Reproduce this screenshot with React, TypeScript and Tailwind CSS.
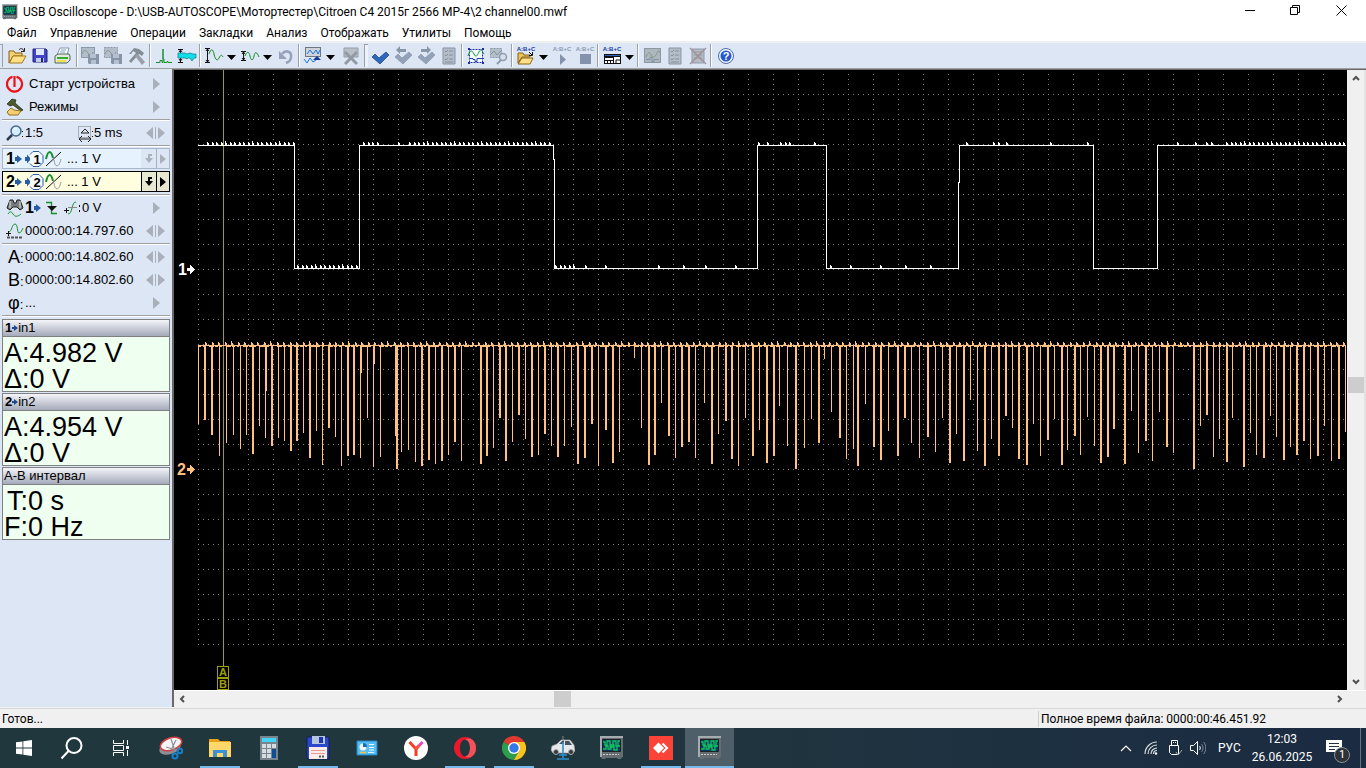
import React from 'react';
import { clsx } from 'clsx';

const MENU = ['Файл', 'Управление', 'Операции', 'Закладки', 'Анализ', 'Отображать', 'Утилиты', 'Помощь'];

type IconProps = { size?: number; className?: string; children: React.ReactNode };

const Icon = ({ size = 20, className, children }: IconProps) => (
    <svg width={size} height={size} viewBox={`0 0 ${size} ${size}`} fill="none" className={clsx('block shrink-0', className)} aria-hidden="true">{children}</svg>
);

/* ---------- toolbar icons ---------- */

const OpenIcon = () => (
    <Icon>
        <path d="M1 5h5l1 2h7v3H5l-4 7z" fill="#f3cf75" stroke="#8a6310" />
        <path d="M1.500 17 5 10h13l-4 7z" fill="#ffe08a" stroke="#a8791b" />
        <path d="M11 4c1-2 4-2 5 1M16.500 2v3.500H13" stroke="#222" />
    </Icon>
);

const SaveIcon = () => (
    <Icon>
        <path d="M2 3h13l1 1v12H2z" fill="#4343c8" stroke="#22227e" />
        <path d="M5 3h8v6H5z" fill="#dfe8fb" />
        <path d="M5 12h8v4H5z" fill="#c5cbe0" />
        <path d="M10 12h2v4h-2z" fill="#22227e" />
    </Icon>
);

const PrintIcon = () => (
    <Icon>
        <path d="M6 2h9l-2 7H3z" fill="#fff" stroke="#8b98a8" />
        <path d="M7 4h5M6 6h5" stroke="#72a7d0" />
        <path d="m1 10 3-2h11l1 2v4l-3 3H1z" fill="#e4e8e2" stroke="#50664d" />
        <path d="M3 12h11" stroke="#35ad2e" strokeWidth="2" />
        <path d="M3 15h9" stroke="#eee24a" strokeWidth="2" />
    </Icon>
);

const CopyWaveIcon = ({ dashed = false }: { dashed?: boolean }) => (
    <Icon>
        <rect x=".5" y="1.500" width="13" height="10" fill="#b4bdca" stroke="#8c97a7" strokeDasharray={dashed ? '2 1' : undefined} />
        <path d="M1 8c2-5 4-4 6-1s3 3 5-1" stroke="#7e9a8e" />
        <path d="M7 8h11v10H8l-1-1z" fill="#8794a8" />
        <path d="M9 8h6v4H9zM10 14h5v4h-5z" fill="#b5c0d0" />
    </Icon>
);

const HammerIcon = () => (
    <Icon>
        <path d="m2 8 5-6 5 1 5 4-2 3-3-2-8 9-2-2 7-8-3-2-2 3z" fill="#858d97" />
        <path d="m11 8 7 8-3 3-7-9z" fill="#9aa0aa" />
    </Icon>
);

const PeakIcon = () => (
    <Icon>
        <path d="M2 16.500h4v-2h2v2h1V3v10h1v3.500h3v-1h1v1h4" stroke="#15902c" />
    </Icon>
);

const BandIcon = () => (
    <Icon>
        <path d="M1 3.500h5M1 16.500h5M3.500 4v4M3.500 12v4M2 6l1.500-2L5 6M2 13l1.500 2L5 13" stroke="#111" />
        <path d="M1 7h7l2 1 3-1 3 1h3v4h-2l-2 3-2-3h-2l-1 1-2-1H1z" fill="#12ddeb" stroke="#087a83" strokeWidth=".7" />
    </Icon>
);

const VertScaleIcon = ({ small = false }: { small?: boolean }) => (
    <Icon>
        {small
            ? <path d="M1 5.500h5M1 14.500h5M3.500 6v8M2 8l1.500-2L5 8M2 12l1.500 2L5 12" stroke="#111" />
            : <path d="M1 2.500h5M1 16.500h5M3.500 3v13M2 5l1.500-2L5 5M2 14l1.500 2L5 14" stroke="#111" />}
        <path d={small ? 'M5 10c2-5 4-5 5 0s3 5 4 0 3-4 5 1' : 'M5 8c2-6 4-5 5 0s3 8 5 4 3-3 4-1'} stroke="#118a24" />
    </Icon>
);

const UndoIcon = () => (
    <Icon>
        <path d="M6 8c4-5 10-2 9 3 0 3-2 5-5 6" stroke="#96a3b8" strokeWidth="2.500" />
        <path d="M3 5v8h8z" fill="#96a3b8" />
    </Icon>
);

const BookmarkWaveIcon = () => (
    <Icon>
        <rect x="2.500" y="1.500" width="15" height="9" fill="#cfd3da" stroke="#6c7783" />
        <path d="m4 8 3-4 3 4 3-4 2 4 2-4" stroke="#1578e8" />
        <path d="m1 13 3 4 3-5 3 4 3-2" stroke="#1578e8" />
        <path d="m10 14 4-4 4 4z" fill="#16389b" />
    </Icon>
);

const DeleteIcon = () => (
    <Icon className="ml-1">
        <path d="M3 2h14v9H3z" fill="#b9bfc8" stroke="#949daa" />
        <path d="m4 6 12 12M16 6 4 18" stroke="#949aa5" strokeWidth="3" />
    </Icon>
);

const CheckIcon = ({ dim = false, arrow = '' }: { dim?: boolean; arrow?: '' | 'left' | 'right' }) => (
    <Icon>
        <path d="m2 11 3-3 4 4 7-6 3 3-9 9z" fill={dim ? '#93a2b8' : '#2e67bb'} stroke={dim ? '#8997ab' : '#173f83'} strokeWidth=".7" />
        {arrow === 'left' && <path d="m3 4 4-4v3h6v3H7v2z" fill="#8997ab" />}
        {arrow === 'right' && <path d="m15 4-4-4v3H5v3h6v2z" fill="#8997ab" />}
    </Icon>
);

const ListIcon = () => (
    <Icon>
        <path d="M4 2h12v16H4z" fill="#b4bcc8" stroke="#8994a3" />
        <path d="m6 5 1 1 2-2M10 5h4m-8 4 1 1 2-2m1 1h4m-8 4 1 1 2-2m1 1h4M6 16h8" stroke="#8491a0" />
    </Icon>
);

const SelectWaveIcon = () => (
    <Icon>
        <rect x="3.500" y="3.500" width="13" height="13" fill="#f4f8ff" stroke="#1c2f9d" strokeDasharray="2 1" />
        <path d="M2 10c2-7 4-6 6-2s3 2 5-2 3-1 5 2" stroke="#15932b" />
        <path d="M3 12.500h4v1h2v2h2v-3h7" stroke="#2045a8" />
        <path d="M2 2h2v2H2zM16 2h2v2h-2zM2 16h2v2H2zM16 16h2v2h-2z" fill="#1c2f9d" />
    </Icon>
);

const FindWaveIcon = () => (
    <Icon>
        <rect x="1.500" y="2.500" width="11" height="9" fill="#b4bdca" stroke="#8c97a7" strokeDasharray="2 1" />
        <path d="m2 8 3-3 3 4 4-4" stroke="#7e9a8e" />
        <circle cx="14" cy="11" r="3.500" fill="#d5deea" stroke="#8e9cae" strokeWidth="1.500" />
        <path d="m12 14-4 4" stroke="#8e9cae" strokeWidth="2" />
    </Icon>
);

const FormulaIcon = ({ kind }: { kind: 'open' | 'play' | 'stop' | 'panel' }) => {
    const dim = kind === 'play' || kind === 'stop';
    return (
        <Icon>
            <text x="10" y="5" textAnchor="middle" fontSize="6" fontWeight="bold" fontFamily="Liberation Sans, sans-serif" fill={dim ? '#8c9ab2' : '#173a9a'}>A:B+C</text>
            {kind === 'open' && (
                <>
                    <path d="M2 7h5l1 2h6v2H6l-4 6z" fill="#eac35b" stroke="#8a6310" />
                    <path d="m2 18 4-6h11l-3 6z" fill="#ffe08a" stroke="#8a6310" />
                    <path d="m13 6 3 3m.5-3v3.500H13" stroke="#111" />
                </>
            )}
            {kind === 'play' && <path d="M8 8v11l6-5.500z" fill="#8493ad" />}
            {kind === 'stop' && <path d="M5 8h11v10H5z" fill="#8493ad" />}
            {kind === 'panel' && (
                <>
                    <path d="M2 8h17v10H2z" fill="#111" />
                    <path d="M3 12h8v2H3zM3 15h2v2H3zM6 15h2v2H6zM9 15h2v2H9zM12 11h6v6h-6z" fill="#fff" />
                    <path d="M14 17v-3h4" stroke="#111" />
                    <path d="M3 9.500h15" stroke="#2f62bd" />
                </>
            )}
        </Icon>
    );
};

const ScopePanelIcon = () => (
    <Icon>
        <rect x="2.500" y="2.500" width="16" height="14" fill="#adb7bd" stroke="#8c98a1" />
        <path d="M4 11c2-6 4-5 5-2s4 3 6-2 2-1 3 0" stroke="#7f9c8b" />
        <path d="M4 13.500h4v-2h2v4h2v-2h5" stroke="#8191a8" />
    </Icon>
);

const CrossedListIcon = () => (
    <Icon>
        <path d="M4 3h12v14H4z" fill="#b4bbc2" stroke="#929ba6" />
        <path d="M6 6h8M6 9h8M6 12h8" stroke="#929ba6" />
        <path d="M2 2 18 18M18 2 2 18" stroke="#a18d94" strokeWidth="1.300" />
    </Icon>
);

const HelpIcon = () => (
    <Icon>
        <circle cx="11" cy="10" r="6.500" fill="#2758c9" stroke="#eef4ff" strokeWidth="2" />
        <circle cx="11" cy="10" r="7.500" stroke="#2b4a93" strokeWidth=".8" />
        <text x="11" y="14" textAnchor="middle" fontSize="11" fontWeight="bold" fontFamily="Liberation Sans, sans-serif" fill="#fff">?</text>
    </Icon>
);

const ToolButton = ({ label, children, disabled }: { label: string; children: React.ReactNode; disabled?: boolean }) => (
    <button type="button" aria-label={label} disabled={disabled} className="w-[23px] h-6 flex items-center justify-center">{children}</button>
);

const DropButton = ({ label }: { label: string }) => (
    <button type="button" aria-label={label} className="w-[13px] h-6 flex items-center justify-center pt-1">
        <svg width="9" height="5" aria-hidden="true"><path d="M0 0h9L4.500 5z" fill="#000" /></svg>
    </button>
);

const Separator = () => <div className="w-1 h-[23px] flex justify-center"><div className="w-px bg-[#9a9fa8]"></div><div className="w-px bg-white"></div></div>;
const Gripper = () => <div className="w-1 h-[23px] ml-1 border-l border-t border-[#9a9fa8] bg-[#eef3fb]"></div>;

const Toolbar = () => (
    <div className="h-[25px] flex items-center bg-[#dce6f5] shrink-0">
        <div className="w-[6px] h-[23px] flex"><div className="w-[3px] border-r border-t border-[#9a9fa8]"></div></div>
        <ToolButton label="Открыть"><OpenIcon /></ToolButton>
        <ToolButton label="Сохранить"><SaveIcon /></ToolButton>
        <ToolButton label="Печать"><PrintIcon /></ToolButton>
        <Separator />
        <ToolButton label="Копировать" disabled><CopyWaveIcon /></ToolButton>
        <ToolButton label="Копировать фрагмент" disabled><CopyWaveIcon dashed /></ToolButton>
        <ToolButton label="Настройка" disabled><HammerIcon /></ToolButton>
        <Separator />
        <ToolButton label="Пики"><PeakIcon /></ToolButton>
        <ToolButton label="Полоса"><BandIcon /></ToolButton>
        <Separator />
        <ToolButton label="Масштаб"><VertScaleIcon /></ToolButton>
        <DropButton label="Выбор масштаба" />
        <ToolButton label="Усиление"><VertScaleIcon small /></ToolButton>
        <DropButton label="Выбор усиления" />
        <ToolButton label="Отменить" disabled><UndoIcon /></ToolButton>
        <Separator />
        <ToolButton label="Закладка"><BookmarkWaveIcon /></ToolButton>
        <DropButton label="Выбор закладки" />
        <ToolButton label="Удалить" disabled><DeleteIcon /></ToolButton>
        <Gripper />
        <ToolButton label="Применить"><CheckIcon /></ToolButton>
        <ToolButton label="Назад" disabled><CheckIcon dim arrow="left" /></ToolButton>
        <ToolButton label="Вперёд" disabled><CheckIcon dim arrow="right" /></ToolButton>
        <ToolButton label="Список" disabled><ListIcon /></ToolButton>
        <Separator />
        <ToolButton label="Выделение"><SelectWaveIcon /></ToolButton>
        <ToolButton label="Поиск" disabled><FindWaveIcon /></ToolButton>
        <Separator />
        <ToolButton label="Открыть скрипт"><FormulaIcon kind="open" /></ToolButton>
        <DropButton label="Выбор скрипта" />
        <ToolButton label="Выполнить" disabled><FormulaIcon kind="play" /></ToolButton>
        <ToolButton label="Остановить" disabled><FormulaIcon kind="stop" /></ToolButton>
        <Separator />
        <ToolButton label="Панель"><FormulaIcon kind="panel" /></ToolButton>
        <DropButton label="Выбор панели" />
        <Separator />
        <ToolButton label="Экран" disabled><ScopePanelIcon /></ToolButton>
        <ToolButton label="Отчёт" disabled><ListIcon /></ToolButton>
        <ToolButton label="Удалить отчёт" disabled><CrossedListIcon /></ToolButton>
        <Separator />
        <ToolButton label="Справка"><HelpIcon /></ToolButton>
    </div>
);

/* ---------- sidebar ---------- */

const NextArrow = () => (
    <button type="button" aria-label="Далее" className="ml-auto mr-3 shrink-0">
        <svg width="7" height="12" className="block" aria-hidden="true"><path d="M0 0v12l7-6z" fill="#a9b0ba" /></svg>
    </button>
);

const PairArrows = () => (
    <button type="button" aria-label="Изменить" className="ml-auto mr-[7px] shrink-0">
        <svg width="19" height="12" className="block" aria-hidden="true"><path d="M7 0v12L0 6zM9 0h1v12H9zM12 0v12l7-6z" fill="#a9b0ba" /></svg>
    </button>
);

const BlueArrow = ({ small = false }: { small?: boolean }) => (
    <svg width={small ? 6 : 7} height="8" className="block shrink-0" aria-hidden="true">
        {small
            ? <path d="M0 3h2V1l4 3-4 3V5H0z" fill="#1d4a8f" />
            : <path d="M0 2h2V0l5 4-5 4V6H0z" fill="#2a5da6" />}
    </svg>
);

const Row = ({ children }: { children: React.ReactNode }) => (
    <div className="h-[23px] flex items-center pl-[6px]">{children}</div>
);

const Rule = () => <div className="h-[3px] mx-[2px] flex flex-col justify-center"><div className="h-px bg-[#a0a0a0]"></div><div className="h-px bg-white"></div></div>;

const Channel = ({ n, active }: { n: number; active?: boolean }) => (
    <div className="h-[23px] px-[2px] py-px">
        <div className={clsx('h-full flex border', active ? 'border-black bg-[#ffffdf]' : 'border-[#a9b7ca] bg-[#e6f2fd]')}>
            <div className="flex flex-1 items-center pl-[3px]">
                <span className="text-[16px] leading-none font-bold">{n}</span>
                <BlueArrow />
                <svg width="20" height="18" viewBox="0 0 20 18" className="block ml-[3px]" aria-hidden="true">
                    <path d="M0 7h2V4.500L6 9l-4 4.500V11H0z" fill="#2a5da6" />
                    <path d="m5 4.500 3-3h6l4 4v7l-4 4H8l-3-3" stroke="#2a5da6" fill="#f5faff" />
                    <text x="12" y="14" textAnchor="middle" fontSize="13" fontWeight="bold" fontFamily="Liberation Sans, sans-serif">{n}</text>
                </svg>
                <svg width="17" height="18" viewBox="0 0 17 18" className="block" aria-hidden="true">
                    <path d="M1 9c2-9 5-9 7-1" stroke="#13902d" strokeWidth="2" fill="none" />
                    <path d="M9 10c1 8 5 8 7-1" stroke="#92989d" fill="none" />
                    <path d="M1 16 16 2" stroke="#111" />
                </svg>
                <span className="ml-[5px]">... 1 V</span>
            </div>
            <div className={clsx('w-[28px] flex', active ? 'text-black' : 'text-[#a9b0ba]')}>
                <button type="button" aria-label={`Инверсия ${n}`} className={clsx('w-[15px] flex items-center justify-center', active ? 'border-l border-black bg-[#e8e8d0]' : 'bg-[#dce6f5]')}>
                    <svg width="8" height="9" aria-hidden="true"><path d="M7 0H3v4H0l4 5 4-5H5V2h2z" fill="currentColor" /></svg>
                </button>
                <button type="button" aria-label={`Настройки ${n}`} className={clsx('w-[13px] flex items-center justify-center border-l', active ? 'border-black bg-[#e8e8d0]' : 'border-[#a9b0ba] bg-[#dce6f5]')}>
                    <svg width="6" height="10" aria-hidden="true"><path d="M0 0v10l6-5z" fill="currentColor" /></svg>
                </button>
            </div>
        </div>
    </div>
);

const Panel = ({ title, index, lines }: { title: string; index?: number; lines: string[] }) => (
    <section className="mx-[2px] mb-px h-[73px] border border-[#808080] bg-[#effff0]">
        <h2 className="h-[17px] flex items-center px-px text-[13px] font-normal border-b border-[#808080] bg-linear-to-b from-[#f4f5f9] to-[#a5aaba]">
            {index && <><span className="font-bold pl-px">{index}</span><BlueArrow small /></>}
            {title}
        </h2>
        <div className="pl-px pt-[3px] text-[27px] leading-[26px] whitespace-nowrap">
            {lines.map((l) => <p key={l} className={clsx(l.startsWith('T') && 'pl-[3px]')}>{l}</p>)}
        </div>
    </section>
);

const Sidebar = () => (
    <aside className="w-[172px] shrink-0 bg-[#dce6f5] pt-[3px] text-[13px] font-['Liberation_Sans',Arial,sans-serif]">
        <Row>
            <svg width="18" height="18" viewBox="0 0 18 18" fill="none" aria-hidden="true">
                <path d="M6.500 1.800a7.500 7.500 0 1 0 4 0M8.500 1v11" stroke="#f01018" strokeWidth="2.200" />
            </svg>
            <span className="ml-[5px]">Старт устройства</span>
            <NextArrow />
        </Row>
        <Row>
            <svg width="18" height="18" viewBox="0 0 18 18" fill="none" aria-hidden="true">
                <path d="m1 6 5-5 4 1-1 3 8 7-2 1-8-6-3 1z" fill="#4b5b2c" stroke="#1b220f" strokeWidth=".7" />
                <path d="m1 14 4-4 3 2 7 1-3 4H3z" fill="#f4cf70" stroke="#96701a" />
            </svg>
            <span className="ml-[5px]">Режимы</span>
            <NextArrow />
        </Row>
        <Rule />
        <Row>
            <svg width="19" height="18" viewBox="0 0 19 18" fill="none" aria-hidden="true">
                <circle cx="10" cy="7" r="5" fill="#d3efff" stroke="#4a6687" strokeWidth="1.500" />
                <path d="m6 11-5 5" stroke="#2d3c50" strokeWidth="2.500" />
                <path d="M8 6c0-2 2-2 3-2" stroke="#fff" />
                <path d="M16 7h1v1h-1zM16 12h1v1h-1z" fill="#111" />
            </svg>
            <span className="w-[52px]">1:5</span>
            <svg width="17" height="18" viewBox="0 0 17 18" fill="none" aria-hidden="true">
                <path d="M1.500 2.500h12v11h-12z" stroke="#777" strokeDasharray="1 1" />
                <path d="m4 9 4-4 4 4zM2 15h12M5 12l-3 3 3 3M11 12l3 3-3 3" stroke="#222" />
                <path d="M15 7h1v1h-1zM15 12h1v1h-1z" fill="#111" />
            </svg>
            <span>5 ms</span>
            <PairArrows />
        </Row>
        <Rule />
        <Channel n={1} />
        <Channel n={2} active />
        <Rule />
        <Row>
            <svg width="18" height="18" viewBox="0 0 18 18" fill="none" aria-hidden="true">
                <path d="M4 1h3l1 3h2l1-3h3l3 8-3 2-3-3H7l-3 3-3-2z" fill="#777c7c" stroke="#222" />
                <path d="M4 2v7M14 2v7" stroke="#e6e9e9" />
                <path d="M2 15c2-3 3-3 5 0s4 3 8 0" stroke="#13902d" />
            </svg>
            <span className="text-[16px] leading-none font-bold ml-px">1</span>
            <BlueArrow />
            <svg width="36" height="18" viewBox="0 0 36 18" fill="none" className="ml-[5px]" aria-hidden="true">
                <path d="M0 3.500h5.500v11H11" stroke="#13902d" strokeWidth="1.300" />
                <path d="M1 7h10l-5 5z" fill="#111" />
                <path d="M18 11.500h5M20.500 9v5" stroke="#111" />
                <path d="M22 15c5 0 3-12 8-12" stroke="#13902d" />
                <path d="M22 8.500h9" stroke="#888" />
                <path d="M33 6h1v2h-1zM33 11h1v2h-1z" fill="#111" />
            </svg>
            <span>0 V</span>
            <NextArrow />
        </Row>
        <Row>
            <svg width="19" height="18" viewBox="0 0 19 18" fill="none" aria-hidden="true">
                <path d="M0 11.500h5M2.500 9v5" stroke="#111" />
                <path d="M3 10c3-1 3-8 6-8s2 9 4 9 3-3 4-5" stroke="#13902d" />
                <path d="M1 15.500h16" stroke="#555" strokeWidth="2" strokeDasharray="3 1" />
            </svg>
            <span>0000:00:14.797.60</span>
            <PairArrows />
        </Row>
        <Rule />
        {['A', 'B'].map((c) => (
            <Row key={c}>
                <span className="w-[19px] pl-[2px] text-[18px] leading-none whitespace-nowrap">{c}<span className="text-[13px]">:</span></span>
                <span>0000:00:14.802.60</span>
                <PairArrows />
            </Row>
        ))}
        <Row>
            <span className="w-[19px] pl-[2px] text-[18px] leading-none whitespace-nowrap">φ<span className="text-[13px]">:</span></span>
            <span>...</span>
            <NextArrow />
        </Row>
        <Rule />
        <div className="pt-[2px]">
            <Panel title="in1" index={1} lines={['A:4.982 V', 'Δ:0 V']} />
            <Panel title="in2" index={2} lines={['A:4.954 V', 'Δ:0 V']} />
            <Panel title="A-B интервал" lines={['T:0 s', 'F:0 Hz']} />
        </div>
    </aside>
);

/* ---------- waveforms ---------- */

const HIGH = 145;
const LOW = 268;

// spans of ripple on channel 1: from, to, level
const RIPPLE: [number, number, number][] = [
    [207, 293, HIGH], [297, 358, LOW], [363, 378, HIGH], [398, 399, HIGH], [409, 552, HIGH],
    [555, 575, LOW], [585, 586, LOW], [605, 606, LOW], [658, 659, LOW], [683, 684, LOW], [705, 706, LOW], [735, 736, LOW],
    [758, 759, HIGH], [767, 768, HIGH], [780, 793, HIGH], [814, 815, HIGH], [830, 831, LOW], [850, 851, LOW], [880, 881, LOW], [905, 906, LOW], [930, 931, LOW],
    [966, 967, HIGH], [993, 999, HIGH], [1006, 1007, HIGH], [1050, 1051, HIGH], [1087, 1088, HIGH],
    [1177, 1178, HIGH], [1195, 1196, HIGH], [1206, 1212, HIGH], [1226, 1344, HIGH],
];

const ripple = (from: number, to: number, y: number, step: number) => {
    let d = '';
    for (let x = from, i = 0; x < to; x += step, i++) {
        const px = Math.round(x);
        const h = i % 6 === 4 ? 5 : 4;
        d += `M${px} ${y - h + 1}h1v${h}h-1zM${px + 1} ${y - 2}h1v3h-1z`;
    }
    return d;
};

// pulses on channel 2: x, bottom, width
const PULSES: [number, number, number][] = [
    [198, 424, 1], [204, 420, 2], [211, 435, 2], [219, 456, 1], [226, 443, 1], [233, 435, 1], [240, 449, 1], [246, 435, 1],
    [252, 454, 2], [259, 426, 1], [265, 438, 1], [266, 391, 1], [271, 446, 2], [278, 438, 1], [284, 441, 1], [290, 451, 2],
    [296, 441, 2], [303, 433, 1], [309, 458, 2], [316, 431, 1], [322, 465, 1], [328, 428, 2], [335, 437, 1], [341, 466, 1],
    [347, 456, 2], [353, 455, 2], [360, 458, 1], [361, 373, 1], [367, 418, 1], [373, 467, 1], [374, 364, 1], [380, 457, 1],
    [395, 436, 1], [396, 469, 2], [401, 452, 1], [408, 450, 1], [415, 462, 1], [421, 466, 2], [428, 460, 2], [435, 464, 1],
    [441, 461, 2], [448, 455, 1], [454, 442, 2], [461, 461, 1], [480, 464, 2], [486, 456, 2], [493, 448, 1], [499, 418, 2],
    [505, 461, 2], [512, 442, 1], [518, 415, 2], [525, 439, 1], [531, 457, 2], [538, 455, 1], [544, 434, 2], [551, 446, 1],
    [557, 457, 2], [564, 446, 1], [571, 427, 1], [577, 464, 2], [584, 458, 2], [591, 424, 2], [598, 466, 1], [605, 430, 2],
    [612, 463, 2], [619, 452, 1], [634, 358, 1], [641, 428, 1], [648, 465, 2], [654, 455, 2], [661, 403, 1], [668, 436, 2],
    [675, 458, 1], [681, 447, 2], [688, 442, 2], [695, 458, 1], [704, 403, 1], [711, 464, 2], [718, 434, 1], [725, 421, 2],
    [731, 459, 2], [738, 466, 1], [745, 418, 1], [752, 456, 2], [759, 430, 1], [766, 463, 2], [773, 456, 2], [779, 406, 1],
    [787, 446, 1], [795, 469, 2], [804, 448, 1], [811, 419, 1], [818, 443, 2], [824, 359, 1], [831, 412, 1], [839, 438, 2],
    [846, 459, 1], [853, 449, 1], [857, 466, 2], [865, 404, 1], [873, 447, 2], [880, 460, 2], [888, 431, 1], [897, 456, 2],
    [904, 418, 2], [911, 443, 1], [919, 458, 1], [927, 437, 2], [935, 452, 1], [942, 418, 1], [949, 463, 2], [956, 434, 1],
    [963, 461, 2], [970, 400, 1], [977, 451, 1], [984, 466, 2], [991, 439, 1], [998, 456, 2], [1005, 416, 2], [1012, 428, 1],
    [1018, 459, 2], [1026, 465, 2], [1033, 424, 1], [1040, 456, 1], [1047, 440, 2], [1054, 419, 1], [1061, 465, 2], [1067, 450, 1],
    [1074, 436, 2], [1080, 455, 1], [1087, 417, 1], [1094, 446, 1], [1100, 463, 2], [1107, 457, 2], [1113, 429, 2], [1124, 464, 2],
    [1131, 411, 1], [1138, 453, 1], [1145, 441, 2], [1152, 461, 1], [1159, 412, 1], [1166, 447, 2], [1173, 453, 1], [1193, 469, 2],
    [1200, 426, 1], [1206, 415, 2], [1213, 457, 1], [1219, 439, 1], [1226, 462, 2], [1232, 418, 1], [1243, 467, 2], [1250, 433, 1],
    [1256, 455, 1], [1263, 458, 2], [1270, 416, 1], [1276, 437, 1], [1283, 460, 2], [1290, 447, 1], [1296, 455, 2], [1303, 441, 2],
    [1310, 459, 1], [1317, 456, 2], [1324, 426, 1], [1331, 461, 1], [1338, 459, 2], [1345, 432, 1],
];

const Scope = () => (
    <svg className="block w-full h-full" shapeRendering="crispEdges" fill="none">
        <defs>
            <pattern id="grid" x="24" y="-1" width="25" height="25" patternUnits="userSpaceOnUse">
                {[0, 5, 10, 15, 20].map((p) => (
                    <React.Fragment key={p}>
                        <rect x={p} y="0" width="1" height="1" fill="#808080" />
                        <rect x="0" y={p} width="1" height="1" fill="#808080" />
                    </React.Fragment>
                ))}
            </pattern>
        </defs>
        <rect x="24" y="0" width="100%" height="575" fill="url(#grid)" />
        <g transform="translate(-174 -70)">
            <path d="M223.500 70v597" stroke="#a0a000" />
            <path
                d="M198 145.500h96.500v123h65v-123h194v14h1v109h203v-123h69v123h132v-86h1v-37h134v123h64v-123h188.500"
                stroke="#fff"
            />
            <path d={RIPPLE.map(([a, b, y]) => ripple(a, b, y, 4.500)).join('')} fill="#fff" />
            <path d="M198 345.500h1148" stroke="#ffc080" />
            <path d="M198 346.500h1148" stroke="#ffc080" strokeDasharray="3 2 2 4 5 1" />
            <path d={ripple(205, 1344, 345, 6.500)} fill="#ffc080" />
            <path d={PULSES.map(([x, y, w]) => `M${x} 346h${w}V${y}h-${w}z`).join('')} fill="#ffc080" />
            <g fontFamily="Liberation Sans, Arial, sans-serif" fontWeight="bold" fontSize="16">
                <text x="178" y="275" fill="#fff">1</text>
                <path d="M187 268h3v-3l5 4.500-5 4.500v-3h-3z" fill="#fff" />
                <text x="177" y="475" fill="#ffc080">2</text>
                <path d="M187 468h3v-3l5 4.500-5 4.500v-3h-3z" fill="#ffc080" />
            </g>
            <g stroke="#a0a000">
                <rect x="217.500" y="666.500" width="11" height="11" rx="1" />
                <rect x="217.500" y="678.500" width="11" height="11" rx="1" />
            </g>
            <g fontFamily="Liberation Sans, Arial, sans-serif" fontSize="11" fontWeight="bold" fill="#a0a000" textAnchor="middle">
                <text x="223" y="676">A</text>
                <text x="223" y="688">B</text>
            </g>
        </g>
    </svg>
);

const Chevron = ({ dir }: { dir: 'up' | 'down' | 'left' | 'right' }) => (
    <svg width="8" height="8" viewBox="0 0 8 8" fill="none" className="block" aria-hidden="true">
        <path
            d={{ up: 'm1 6 3-3 3 3', down: 'm1 2 3 3 3-3', left: 'M6 1 3 4l3 3', right: 'm2 1 3 3-3 3' }[dir]}
            stroke="#505050"
            strokeWidth="2"
        />
    </svg>
);

/* ---------- taskbar ---------- */

const ScopeAppIcon = ({ size = 24 }: { size?: number }) => (
    <svg width={size} height={size} viewBox="0 0 24 24" fill="none" className="block" aria-hidden="true">
        <path d="M0 0h23v21h-1l-1 2h-3l-1-1H6l-1 1H2l-1-2H0z" fill="#666d72" />
        <path d="M0 0h23v2H2v19H0z" fill="#a6acb0" />
        <path d="M2.500 3.500h18v12h-18z" fill="#053a6b" stroke="#222" />
        <path d="M3 6h2v3h2V5h3v6h3V5h3v5h2V5h2M3 13h3v-3h2v3h3v-4h3v5h3v-4h3" stroke="#14c35a" strokeWidth="1.300" />
        <path d="M3 18.500h16" stroke="#c6cbce" strokeDasharray="2 1" />
    </svg>
);

const TASKS: { label: string; open?: boolean; active?: boolean; icon: React.ReactNode }[] = [
    {
        label: 'Ножницы', icon: (
            <Icon size={24}>
                <ellipse cx="11" cy="12" rx="11" ry="6" transform="rotate(-18 11 12)" fill="#8c9094" />
                <ellipse cx="12" cy="8" rx="11" ry="6" transform="rotate(-18 12 8)" fill="#f4f5f6" stroke="#d23e41" strokeWidth="1.500" />
                <path d="m12 3 4 12M7 11l10 3M17 4l-4 8" stroke="#8c9094" strokeWidth="1.200" />
                <circle cx="16" cy="20" r="2.500" stroke="#1681c8" strokeWidth="2" />
                <circle cx="21" cy="15" r="2.200" stroke="#1681c8" strokeWidth="2" />
            </Icon>
        ),
    },
    {
        label: 'Проводник', open: true, icon: (
            <Icon size={24}>
                <path d="M1 3h9l2 2h10v16H1z" fill="#e7a219" />
                <path d="M1 6h22v15H1z" fill="#ffd869" />
                <path d="M5 21v-7h14v7h-4v-4H9v4z" fill="#3b93d6" />
            </Icon>
        ),
    },
    {
        label: 'Калькулятор', icon: (
            <Icon size={24}>
                <path d="M3 0h18v24H3z" fill="#78848e" />
                <path d="M5 2h14v4H5z" fill="#42d3f5" />
                <path d="M5 8h4v4H5zM10 8h4v4h-4zM15 8h4v4h-4zM5 13h4v4H5zM10 13h4v4h-4zM5 18h4v4H5zM10 18h4v4h-4z" fill="#d6dde1" />
                <path d="M15 13h4v9h-4z" fill="#0f4f91" />
            </Icon>
        ),
    },
    {
        label: 'Total Commander', open: true, icon: (
            <Icon size={24}>
                <path d="M1 1h21l1 1v21H2l-1-1z" fill="#2b48cd" stroke="#10205f" />
                <path d="M6 0h13v8H6z" fill="#b5c4de" />
                <path d="M13 1h4v6h-4z" fill="#1d36a9" />
                <path d="M3 11h18v12H3z" fill="#fbecea" />
                <path d="M5 14.500h14M5 17.500h14" stroke="#e79a96" />
                <path d="M13 20.500h6" stroke="#555" strokeWidth="2" strokeDasharray="2 1" />
            </Icon>
        ),
    },
    {
        label: 'Панель управления', icon: (
            <Icon size={24}>
                <path d="M2 5h20v14H2z" fill="#55bcf4" stroke="#2584c3" />
                <circle cx="8" cy="11" r="3.500" fill="#eef9ff" />
                <path d="M8 11V7a4 4 0 0 1 4 4z" fill="#1570b2" />
                <path d="M14 8.500h5M14 11.500h5M14 14h5" stroke="#fff" />
                <path d="M5 16.500h6" stroke="#f6c34d" strokeWidth="1.500" />
                <path d="M13 16.500h6" stroke="#dff3ff" />
            </Icon>
        ),
    },
    {
        label: 'Яндекс', icon: (
            <Icon size={24}>
                <circle cx="12" cy="12" r="12" fill="#fff" />
                <path d="M5.500 6 12 13v7" stroke="#fb3b21" strokeWidth="3" />
                <path d="m18.500 6-6.500 7" stroke="#e949be" strokeWidth="3" />
                <path d="m15 9.500-3 3.500" stroke="#fb5a3a" strokeWidth="3" />
            </Icon>
        ),
    },
    {
        label: 'Opera', open: true, icon: (
            <Icon size={24}>
                <path d="M12 1a11 11 0 1 0 0 22 11 11 0 0 0 0-22zm0 2.500c2.800 0 5 3.600 5 8.500s-2.200 8.500-5 8.500S7 16.900 7 12s2.200-8.500 5-8.500z" fill="#e8192c" fillRule="evenodd" />
                <path d="M12 3.500c2.800 0 5 3.600 5 8.500s-2.200 8.500-5 8.500c6 3 11-2 11-8.500S18 .5 12 3.500z" fill="#f4525a" />
            </Icon>
        ),
    },
    {
        label: 'Chrome', open: true, icon: (
            <Icon size={24}>
                <path d="M12 12 1.600 6a12 12 0 0 1 20.800 0z" fill="#e0392e" />
                <path d="M12 12V6h10.400A12 12 0 0 1 12 24z" fill="#fcc31e" />
                <path d="M12 12 1.600 6A12 12 0 0 0 12 24l5.200-9z" fill="#2c9d4a" />
                <circle cx="12" cy="12" r="6" fill="#fff" />
                <circle cx="12" cy="12" r="4.700" fill="#3478e8" />
            </Icon>
        ),
    },
    {
        label: 'Автосервис', icon: (
            <Icon size={24}>
                <path d="m0 14 1-4 5-2 4-4h9l4 5 1 6-2 2H2z" fill="#e6e8e9" stroke="#9ca0a4" strokeWidth=".7" />
                <path d="m8 8 3-3h2v3zM14 5h4l3 4h-7z" fill="#46525c" />
                <circle cx="5" cy="16" r="2.500" fill="#33383c" stroke="#aaa" />
                <circle cx="20" cy="16" r="2.500" fill="#33383c" stroke="#aaa" />
                <path d="M12 0v5" stroke="#888" />
                <path d="M12 6v16M8 19h8M6 23h12" stroke="#2b91cf" strokeWidth="1.600" />
            </Icon>
        ),
    },
    { label: 'Осциллограф', icon: <ScopeAppIcon /> },
    {
        label: 'AnyDesk', open: true, icon: (
            <Icon size={24}>
                <path d="M0 0h24v24H0z" fill="#fb4338" />
                <path d="m9.500 6.500 5.500 5.500-5.500 5.500L4 12z" fill="#fff" />
                <path d="m13.500 7.500 4.500 4.500-4.500 4.500" stroke="#fff" strokeWidth="2" />
            </Icon>
        ),
    },
    { label: 'USB Oscilloscope', open: true, active: true, icon: <ScopeAppIcon /> },
];

const Taskbar = () => (
    <footer className="h-10 shrink-0 flex items-stretch bg-linear-to-r from-[#21373e] from-40% to-[#1b2b42] text-white">
        <button type="button" aria-label="Пуск" className="w-12 flex items-center justify-center">
            <Icon size={16}><path d="m0 2.300 6.500-.9v6.200H0zM7.300 1.300 16 0v7.600H7.300zM0 8.400h6.500v6.200L0 13.700zM7.300 8.400H16V16l-8.700-1.200z" fill="#fff" /></Icon>
        </button>
        <button type="button" aria-label="Поиск" className="w-12 flex items-center justify-center">
            <Icon size={24}><circle cx="14" cy="9.500" r="7.500" stroke="#fff" strokeWidth="2" /><path d="m8.500 15-7 7.500" stroke="#fff" strokeWidth="2" /></Icon>
        </button>
        <button type="button" aria-label="Представление задач" className="w-[50px] flex items-center justify-center">
            <Icon size={16}><path d="M.500 0v3.500h10V0M.500 5.500h10v5H.500zM.500 16v-3.500h10V16M14.500 0v5M14.500 10v6" stroke="#fff" /><path d="M13 6h3v3h-3z" fill="#fff" /></Icon>
        </button>
        {TASKS.map((t) => (
            <button
                key={t.label}
                type="button"
                aria-label={t.label}
                className={clsx('w-[49px] flex flex-col items-center', t.active && 'bg-[#4f5f69]')}
            >
                <span className="flex-1 flex items-center">{t.icon}</span>
                {t.open && <span className={clsx('h-[2px] -mt-[2px] bg-[#76b9ed]', t.active ? 'w-full' : 'w-10')}></span>}
            </button>
        ))}
        <div className="ml-auto flex items-center font-['Roboto','Noto_Sans',sans-serif] text-[12px]">
            <Icon size={12} className="mr-3"><path d="m1 9 5-5 5 5" stroke="#fff" strokeWidth="1.200" /></Icon>
            <Icon size={14} className="mr-[10px]">
                <path d="M1 13A12 12 0 0 1 13 1M4 13a9 9 0 0 1 9-9M7 13a6 6 0 0 1 6-6M9.500 13a3.500 3.500 0 0 1 3.500-3.500" stroke="#d6dce0" strokeWidth="1.200" />
                <circle cx="12" cy="12.500" r="1.200" fill="#fff" />
            </Icon>
            <Icon size={16} className="mr-[6px]">
                <path d="M3.500 5V.500h6V5M1.500 5.500h9v9h-7l-2-2zM5 2.500h1M7 2.500h1" stroke="#fff" />
                <path d="m8 12 2 3 4-5" stroke="#9aa8b2" />
            </Icon>
            <Icon size={16} className="mr-3">
                <path d="M.500 5.500h3l4-4v13l-4-4h-3zM9.500 6c1 1 1 3 0 4" stroke="#fff" />
                <path d="M11.500 4c2 2 2 6 0 8M13.500 2c3 3 3 9 0 12" stroke="#7c8994" />
            </Icon>
            <span className="w-6">РУС</span>
            <div className="w-20 text-center leading-[18px]">
                <p>12:03</p>
                <p>26.06.2025</p>
            </div>
            <button type="button" aria-label="Уведомления" className="relative w-8 h-9 flex justify-center">
                <Icon size={18} className="mt-[9px] -ml-2">
                    <path d="M1 1h16v12h-3v4l-4-4H1z" fill="#fff" />
                    <path d="M4 4.500h10M4 7.500h10M4 10.500h6" stroke="#1f2e40" />
                </Icon>
                <span className="absolute left-3 top-[17px] w-4 h-4 rounded-full bg-[#2c3237] border border-[#8a9299] text-[11px] leading-[14px]">1</span>
            </button>
            <div className="ml-[6px] w-[6px] h-10 border-l border-[#68747f]"></div>
        </div>
    </footer>
);

export default function App() {
    return (
        <div className="h-screen flex flex-col bg-[#f0f0f0] text-black overflow-hidden font-['Liberation_Sans',Arial,sans-serif]">
            <header className="bg-white font-['Roboto','Noto_Sans',sans-serif] text-[12px] shrink-0">
                <div className="h-6 flex items-center pl-[2px]">
                    <ScopeAppIcon size={16} />
                    <h1 className="ml-[5px] font-normal whitespace-nowrap">USB Oscilloscope - D:\USB-AUTOSCOPE\Мотортестер\Citroen C4 2015г 2566 MP-4\2 channel00.mwf</h1>
                    <div className="ml-auto flex pr-[2px] -mt-[3px]">
                        <button type="button" aria-label="Свернуть" className="w-[46px] flex justify-center"><Icon size={11}><path d="M1 5.500h10" stroke="#000" /></Icon></button>
                        <button type="button" aria-label="Развернуть" className="w-[46px] flex justify-center"><Icon size={11}><path d="M.500 2.500h7v7h-7zM2.500 2V.500h7v7H8" stroke="#000" /></Icon></button>
                        <button type="button" aria-label="Закрыть" className="w-[46px] flex justify-center"><Icon size={11}><path d="m.500.500 10 10M10.500.500l-10 10" stroke="#000" /></Icon></button>
                    </div>
                </div>
                <nav className="h-[17px] flex items-center gap-[13px] pl-[7px]">
                    {MENU.map((m) => <button key={m} type="button">{m}</button>)}
                </nav>
            </header>
            <div className="h-[2px] bg-[#f0f0f0] shrink-0"></div>
            <Toolbar />

            <div className="flex-1 min-h-0 flex border-t border-[#a0a0a0]">
                <Sidebar />
                <main className="flex-1 min-w-0 flex flex-col border-l-2 border-t border-[#696969] bg-[#f0f0f0]">
                    <div className="flex-1 min-h-0 flex">
                        <div className="flex-1 min-w-0 bg-black overflow-hidden"><Scope /></div>
                        <div className="w-[17px] flex flex-col items-center justify-between py-1 bg-[#f0f0f0]">
                            <button type="button" aria-label="Вверх"><Chevron dir="up" /></button>
                            <div className="w-4 h-4 mt-[10px] bg-[#cdcdcd]"></div>
                            <button type="button" aria-label="Вниз"><Chevron dir="down" /></button>
                        </div>
                        <div className="w-[2px] bg-[#e3e3e3]"></div>
                    </div>
                    <div className="h-[17px] shrink-0 flex items-center pl-1 pr-[22px] border-t border-white">
                        <button type="button" aria-label="Влево"><Chevron dir="left" /></button>
                        <div className="flex-1 h-4"><div className="ml-[32%] w-[17px] h-4 bg-[#cdcdcd]"></div></div>
                        <button type="button" aria-label="Вправо"><Chevron dir="right" /></button>
                    </div>
                </main>
            </div>

            <div className="h-5 shrink-0 mt-px border-t border-[#d9d9d9] flex items-center bg-[#f0f0f0] font-['Roboto','Noto_Sans',sans-serif] text-[12px]">
                <span className="flex-1 pl-[2px]">Готов...</span>
                <span className="w-[328px] h-4 leading-4 pl-[2px] border-l border-[#d0d0d0]">Полное время файла: 0000:00:46.451.92</span>
            </div>
            <Taskbar />
        </div>
    );
}
